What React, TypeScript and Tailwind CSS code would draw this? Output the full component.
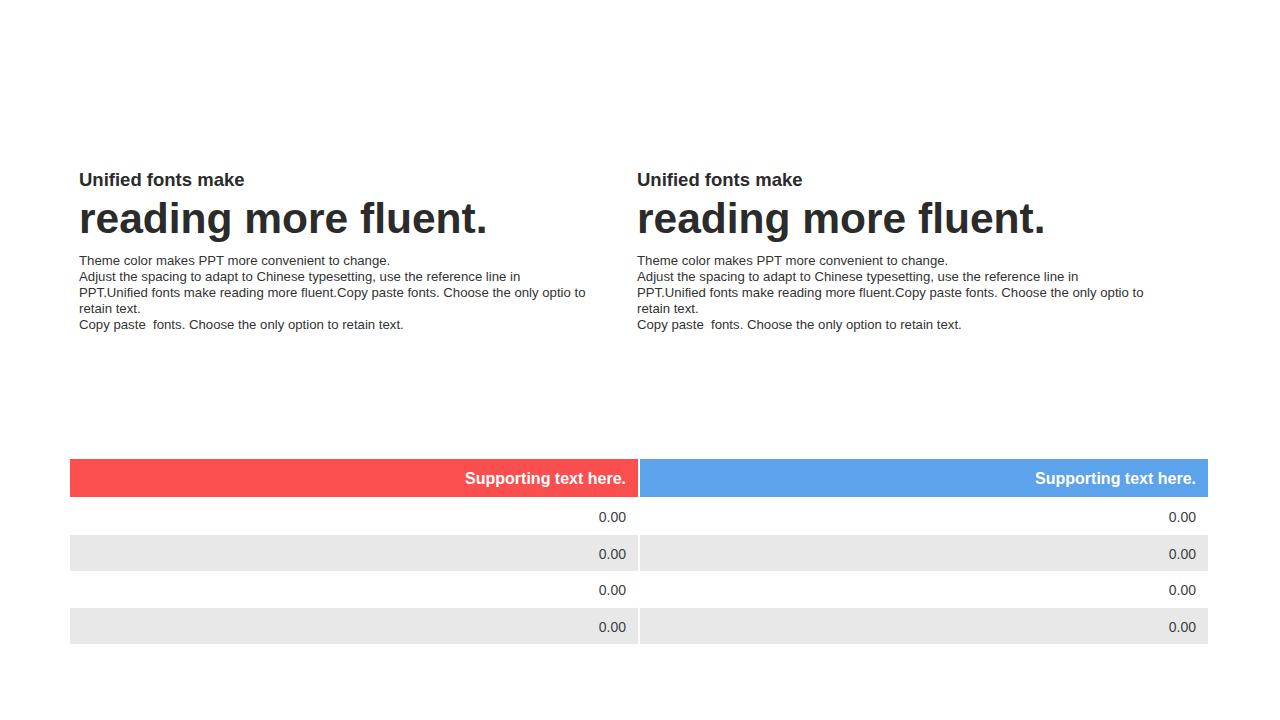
const paragraph = [
  "Theme color makes PPT more convenient to change.",
  "Adjust the spacing to adapt to Chinese typesetting, use the reference line in",
  "PPT.Unified fonts make reading more fluent.Copy paste fonts. Choose the only optio to",
  "retain text.",
  "Copy paste\u00a0 fonts. Choose the only option to retain text.",
];

const TextBlock = () => (
  <div className="w-[520px] text-[#2b2b2b]">
    <h3 className="text-[18.5px] font-bold leading-[22px]">Unified fonts make</h3>
    <h2 className="mt-[4px] text-[42.5px] font-bold leading-[48px]">reading more fluent.</h2>
    <div className="mt-[10px] text-[13.2px] leading-[16px] text-[#333] whitespace-nowrap">
      {paragraph.map((line, i) => (
        <p key={i}>{line}</p>
      ))}
    </div>
  </div>
);

const columns = [
  { title: "Supporting text here.", color: "bg-[#fb4f4f]" },
  { title: "Supporting text here.", color: "bg-[#5ca3eb]" },
];

const rows = ["0.00", "0.00", "0.00", "0.00"];

export default function App() {
  return (
    <div
      className="w-[1280px] h-[720px] bg-white overflow-hidden"
      style={{ fontFamily: '"Liberation Sans", Arial, sans-serif' }}
    >
      {/* Text columns */}
      <div className="pt-[169px] pl-[79px] flex gap-[38px]">
        <TextBlock />
        <TextBlock />
      </div>

      {/* Table */}
      <div className="mt-[126px] ml-[70px] w-[1138px] grid grid-cols-2 gap-x-[2px]">
        {columns.map((col, i) => (
          <div key={i} className={`${col.color} h-[38px] pt-[2px] flex items-center justify-end pr-[12px] text-white text-[16px] font-bold`}>
            {col.title}
          </div>
        ))}
        {rows.map((val, r) =>
          columns.map((_, c) => (
            <div
              key={`${r}-${c}`}
              className={`${r % 2 === 1 ? "bg-[#e8e8e8]" : "bg-white"} h-[36.5px] pt-[3px] flex items-center justify-end pr-[12px] text-[14px] text-[#404040] ${r === 0 ? "mt-px" : ""}`}
            >
              {val}
            </div>
          ))
        )}
      </div>
    </div>
  );
}
